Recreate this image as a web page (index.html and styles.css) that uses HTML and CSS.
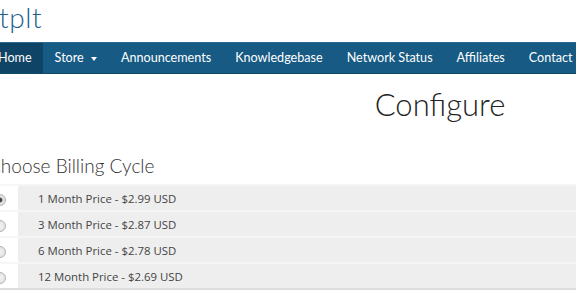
FILE: index.html
```html
<!DOCTYPE html>
<html lang="en">
<head>
  <meta charset="UTF-8" />
  <title>Configure</title>
  <link rel="stylesheet" href="styles.css">
</head>
<body>
  <div class="brand">tplt</div>

  <nav class="navbar">
    <ul class="nav">
      <li class="active"><a href="#">Home</a></li>
      <li><a href="#">Store <span class="caret"></span></a></li>
      <li><a href="#">Announcements</a></li>
      <li><a href="#">Knowledgebase</a></li>
      <li><a href="#">Network Status</a></li>
      <li><a href="#">Affiliates</a></li>
      <li><a href="#">Contact</a></li>
    </ul>
  </nav>

  <div class="page-title">
    <h1>Configure</h1>
  </div>

  <h3 class="section-title">Choose Billing Cycle</h3>

  <table class="cycles">
    <tr>
      <td class="pick"><input type="radio" name="cycle" checked></td>
      <td class="label">1 Month Price - $2.99 USD</td>
    </tr>
    <tr>
      <td class="pick"><input type="radio" name="cycle"></td>
      <td class="label">3 Month Price - $2.87 USD</td>
    </tr>
    <tr>
      <td class="pick"><input type="radio" name="cycle"></td>
      <td class="label">6 Month Price - $2.78 USD</td>
    </tr>
    <tr>
      <td class="pick"><input type="radio" name="cycle"></td>
      <td class="label">12 Month Price - $2.69 USD</td>
    </tr>
  </table>
</body>
</html>
```

FILE: styles.css
```css
body {
  margin: 0;
  padding: 0;
  font-family: Lato, "Open Sans", sans-serif;
  background: #ffffff;
  color: #333;
  overflow: hidden;
}

.brand {
  height: 42px;
  line-height: 34px;
  font-size: 28px;
  font-weight: 300;
  color: #1d5e8c;
  margin-left: -1px;
  letter-spacing: 0.6px;
}

.navbar {
  background-color: #175a84;
  border-top: 1px solid #2a6a94;
  border-bottom: 1px solid #0f4869;
  height: 30px;
}

.nav {
  list-style: none;
  margin: 0 0 0 -14px;
  padding: 0;
  display: flex;
  white-space: nowrap;
}

.nav li a {
  display: block;
  padding: 0 12px;
  line-height: 30px;
  font-size: 12.6px;
  color: #ffffff;
  text-decoration: none;
}

.nav li.active a {
  padding-right: 11px;
  background-color: #0f4467;
}

.caret {
  display: inline-block;
  width: 0;
  height: 0;
  margin-left: 4px;
  vertical-align: middle;
  border-top: 4px solid #fff;
  border-left: 3px solid transparent;
  border-right: 3px solid transparent;
}

.page-title {
  width: 880px;
  text-align: center;
}

.page-title h1 {
  margin: 12px 0 0;
  font-size: 31px;
  font-weight: 300;
  line-height: 36px;
  color: #222;
}

.section-title {
  margin: 31px 0 0 -12px;
  font-size: 19px;
  font-weight: 300;
  line-height: 26px;
  color: #333;
}

.cycles {
  margin: 5px 0 0 -7px;
  border-collapse: collapse;
  width: 600px;
  border-top: 2px solid #dddddd;
  border-bottom: 2px solid #dddddd;
}

.cycles td {
  height: 24px;
  padding: 0;
  border-top: 2px solid #f6f6f6;
}

.cycles .pick {
  width: 25px;
  background: #ffffff;
  text-align: left;
}

.cycles .pick input {
  appearance: none;
  -webkit-appearance: none;
  margin: 0 0 0 1px;
  width: 12px;
  height: 12px;
  border: 1px solid #b4b4b4;
  border-radius: 50%;
  background: radial-gradient(circle, #f4f4f4 0%, #dcdcdc 100%);
  vertical-align: middle;
  box-sizing: border-box;
}

.cycles .pick input:checked {
  background: radial-gradient(circle, #333 0, #555 2px, #e6e6e6 3px, #dcdcdc 100%);
}

.cycles .label {
  background: #eeeeee;
  padding-left: 20px;
  font-family: "Open Sans", sans-serif;
  font-size: 11.4px;
  color: #444;
}
```
